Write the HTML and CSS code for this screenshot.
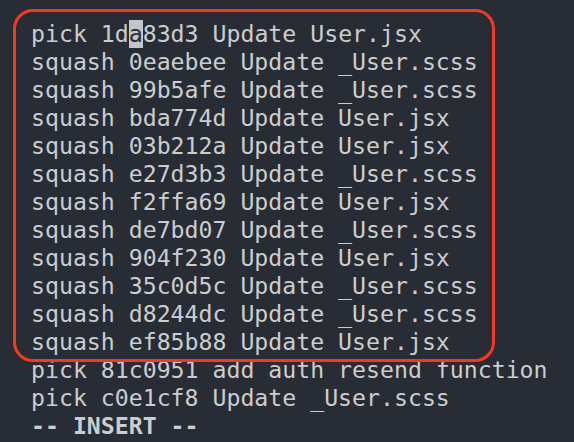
FILE: index.html
```html
<!DOCTYPE html>
<html>
<head>
<meta charset="utf-8">
<link rel="stylesheet" href="styles.css">
</head>
<body>
<div class="term">
  <div class="lines">
    <div class="line">pick 1d<span class="cursor">a</span>83d3 Update User.jsx</div>
    <div class="line">squash 0eaebee Update _User.scss</div>
    <div class="line">squash 99b5afe Update _User.scss</div>
    <div class="line">squash bda774d Update User.jsx</div>
    <div class="line">squash 03b212a Update User.jsx</div>
    <div class="line">squash e27d3b3 Update _User.scss</div>
    <div class="line">squash f2ffa69 Update User.jsx</div>
    <div class="line">squash de7bd07 Update _User.scss</div>
    <div class="line">squash 904f230 Update User.jsx</div>
    <div class="line">squash 35c0d5c Update _User.scss</div>
    <div class="line">squash d8244dc Update _User.scss</div>
    <div class="line">squash ef85b88 Update User.jsx</div>
    <div class="line">pick 81c0951 add auth resend function</div>
    <div class="line">pick c0e1cf8 Update _User.scss</div>
    <div class="line mode">-- INSERT --</div>
  </div>
  <div class="highlight"></div>
</div>
</body>
</html>
```
FILE: styles.css
```css
html, body {
  margin: 0;
  padding: 0;
  background: #282c34;
}
.term {
  position: relative;
  width: 574px;
  height: 442px;
  overflow: hidden;
  background: #282c34;
}
.lines {
  padding: 20px 0 0 31px;
  font-family: "DejaVu Sans Mono", monospace;
  font-size: 23.2px;
  line-height: 28px;
  color: #cbcdd0;
}
.line {
  height: 28px;
  white-space: pre;
}
.cursor {
  background: #c3c5c8;
  color: #282c34;
  display: inline-block;
  height: 28px;
}
.mode {
  font-weight: bold;
}
.highlight {
  position: absolute;
  left: 13px;
  top: 9px;
  width: 476px;
  height: 347px;
  border: 3px solid #f5391f;
  border-radius: 20px;
}
```
